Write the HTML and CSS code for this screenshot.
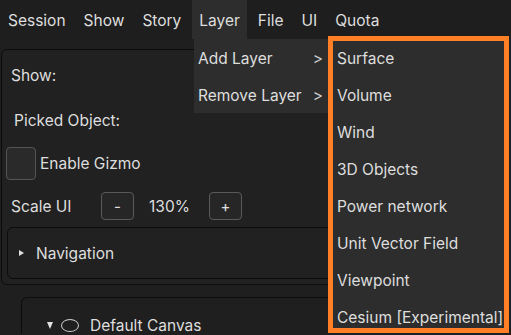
FILE: index.html
```html
<!DOCTYPE html>
<html lang="en">
<head>
    <meta charset="UTF-8">
    <meta name="viewport" content="width=device-width, initial-scale=1.0">
    <title>Layers</title>
    <link rel="stylesheet" href="styles.css">
</head>
<body>
    <nav class="menubar">
        <span class="menu-item">Session</span>
        <span class="menu-item">Show</span>
        <span class="menu-item">Story</span>
        <span class="menu-item active">Layer</span>
        <span class="menu-item">File</span>
        <span class="menu-item">UI</span>
        <span class="menu-item">Quota</span>
    </nav>

    <div class="dropdown">
        <div class="dropdown-item"><span>Add Layer</span><span class="arrow">&gt;</span></div>
        <div class="dropdown-item"><span>Remove Layer</span><span class="arrow">&gt;</span></div>
    </div>

    <div class="submenu">
        <div class="submenu-list">
            <div class="submenu-item">Surface</div>
            <div class="submenu-item">Volume</div>
            <div class="submenu-item">Wind</div>
            <div class="submenu-item">3D Objects</div>
            <div class="submenu-item">Power network</div>
            <div class="submenu-item">Unit Vector Field</div>
            <div class="submenu-item">Viewpoint</div>
            <div class="submenu-item">Cesium [Experimental]</div>
        </div>
    </div>

    <main>
        <section class="panel">
            <div class="row show-row">Show:</div>
            <div class="row picked-row">Picked Object:</div>
            <label class="row gizmo-row">
                <span class="checkbox"></span>
                <span>Enable Gizmo</span>
            </label>
            <div class="row scale-row">
                <span class="scale-label">Scale UI</span>
                <button class="small-btn">-</button>
                <span class="scale-value">130%</span>
                <button class="small-btn">+</button>
            </div>
            <div class="collapse">
                <span class="tri-right"></span>
                <span>Navigation</span>
            </div>
        </section>

        <section class="canvas-box">
            <div class="canvas-head">
                <span class="tri-down"></span>
                <span class="ellipse"></span>
                <span>Default Canvas</span>
            </div>
        </section>
    </main>
</body>
</html>
```

FILE: styles.css
```css
body {
    margin: 0;
    width: 511px;
    height: 335px;
    overflow: hidden;
    background: #1f1f1f;
    color: #dedede;
    font-family: Inter, "Noto Sans", sans-serif;
    font-size: 15.5px;
    position: relative;
}

.menubar {
    display: flex;
    height: 39px;
    align-items: stretch;
    gap: 4px;
    padding-left: 1px;
    background: #1e1e1e;
}

.menu-item {
    display: flex;
    align-items: center;
    padding: 2px 7px 0;
}

.menu-item.active {
    background: #2d2d2d;
}

.dropdown {
    position: absolute;
    left: 194px;
    top: 39px;
    width: 134px;
    background: #2d2d2d;
}

.dropdown-item {
    display: flex;
    justify-content: space-between;
    align-items: center;
    height: 37px;
    padding: 1px 5px 0 4px;
    box-sizing: border-box;
}

.arrow {
    color: #cfcfcf;
}

.submenu {
    position: absolute;
    left: 328px;
    top: 36px;
    width: 171px;
    height: 287px;
    border: 5px solid #ff7f27;
    background: #2d2d2d;
    z-index: 2;
}

.submenu-list {
    margin-top: -1px;
}

.submenu-item {
    display: flex;
    align-items: center;
    height: 37px;
    padding-left: 4px;
    white-space: nowrap;
}

main {
    padding: 10px 4px 0 1px;
}

.panel {
    border: 1px solid #0c0c0c;
    border-radius: 6px;
    background: #212121;
    padding: 0 0 5px 4px;
}

.row {
    display: flex;
    align-items: center;
}

.show-row {
    height: 50px;
    padding-left: 5px;
}

.picked-row {
    height: 40px;
    padding-left: 8px;
}

.gizmo-row {
    margin-top: 7px;
    height: 33px;
    gap: 4px;
}

.checkbox {
    width: 28px;
    height: 31px;
    border: 1px solid #555;
    border-radius: 4px;
    background: #2a2a2a;
}

.scale-row {
    margin-top: 12px;
    height: 28px;
    padding-left: 5px;
}

.scale-label {
    width: 90px;
}

.small-btn {
    width: 33px;
    height: 28px;
    border: 1px solid #5a5a5a;
    border-radius: 4px;
    background: #262626;
    color: #e0e0e0;
    font-family: Inter, sans-serif;
    font-size: 15px;
    padding: 0;
}

.scale-value {
    width: 75px;
    padding-right: 4px;
    box-sizing: border-box;
    text-align: center;
}

.collapse {
    display: flex;
    align-items: center;
    margin: 7px 0 0 1px;
    height: 50px;
    border: 1px solid #0c0c0c;
    border-radius: 6px;
    padding-left: 11px;
    gap: 12px;
}

.tri-right {
    width: 0;
    height: 0;
    border-top: 3.5px solid transparent;
    border-bottom: 3.5px solid transparent;
    border-left: 5px solid #e0e0e0;
}

.canvas-box {
    margin: 12px 0 0 20px;
    height: 36px;
    border: 1px solid #0c0c0c;
    border-bottom: none;
    border-radius: 6px 6px 0 0;
}

.canvas-head {
    display: flex;
    align-items: center;
    gap: 8px;
    margin-top: 17px;
    padding-left: 25px;
    height: 20px;
}

.tri-down {
    width: 0;
    height: 0;
    border-left: 3.5px solid transparent;
    border-right: 3.5px solid transparent;
    border-top: 7px solid #e0e0e0;
}

.ellipse {
    width: 16px;
    height: 11px;
    border: 1.5px solid #cfcfcf;
    border-radius: 50%;
    margin-right: 3px;
}
```
